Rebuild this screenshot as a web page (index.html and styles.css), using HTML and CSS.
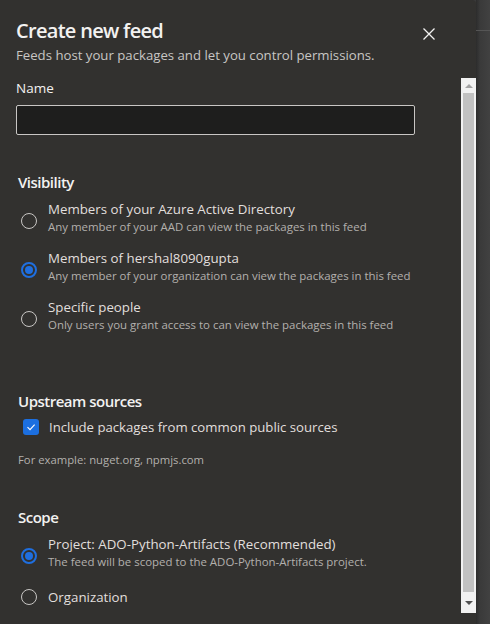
FILE: index.html
```html
<!DOCTYPE html>
<html lang="en">
<head>
<meta charset="utf-8">
<title>Create new feed</title>
<link rel="stylesheet" href="styles.css">
</head>
<body>
<div class="page">
  <div class="panel">
    <header class="header">
      <div class="titles">
        <h1 class="title">Create new feed</h1>
        <p class="subtitle">Feeds host your packages and let you control permissions.</p>
      </div>
      <button class="close" aria-label="Close">
        <svg width="12" height="12" viewBox="0 0 12 12"><path d="M0.5 0.5 L11.5 11.5 M11.5 0.5 L0.5 11.5" stroke="#f3f2f1" stroke-width="1.3" fill="none"/></svg>
      </button>
    </header>
    <div class="body">
      <div class="content">
        <label class="field-label">Name</label>
        <input class="text-input" type="text">

        <h2 class="section-title sec-visibility">Visibility</h2>
        <div class="option">
          <span class="radio"></span>
          <div class="option-text">
            <div class="option-label">Members of your Azure Active Directory</div>
            <div class="option-desc">Any member of your AAD can view the packages in this feed</div>
          </div>
        </div>
        <div class="option">
          <span class="radio checked"></span>
          <div class="option-text">
            <div class="option-label">Members of hershal8090gupta</div>
            <div class="option-desc">Any member of your organization can view the packages in this feed</div>
          </div>
        </div>
        <div class="option">
          <span class="radio"></span>
          <div class="option-text">
            <div class="option-label">Specific people</div>
            <div class="option-desc">Only users you grant access to can view the packages in this feed</div>
          </div>
        </div>

        <h2 class="section-title sec-upstream">Upstream sources</h2>
        <div class="check-row">
          <span class="checkbox">
            <svg width="10" height="10" viewBox="0 0 10 10"><path d="M1.5 5.2 L4 7.6 L8.6 2.6" stroke="#ffffff" stroke-width="1.1" fill="none"/></svg>
          </span>
          <span class="check-label">Include packages from common public sources</span>
        </div>
        <p class="hint">For example: nuget.org, npmjs.com</p>

        <h2 class="section-title sec-scope">Scope</h2>
        <div class="option">
          <span class="radio checked"></span>
          <div class="option-text">
            <div class="option-label">Project: ADO-Python-Artifacts (Recommended)</div>
            <div class="option-desc">The feed will be scoped to the ADO-Python-Artifacts project.</div>
          </div>
        </div>
        <div class="option single">
          <span class="radio"></span>
          <div class="option-text">
            <div class="option-label">Organization</div>
          </div>
        </div>
      </div>
      <div class="scrollbar">
        <div class="sb-btn"><span class="arrow-up"></span></div>
        <div class="sb-track"><div class="sb-thumb"></div></div>
        <div class="sb-btn down"><span class="arrow-down"></span></div>
      </div>
    </div>
  </div>
  <div class="backdrop"><div class="backdrop-top"></div></div>
</div>
</body>
</html>
```
FILE: styles.css
```css
* { box-sizing: border-box; }
html, body { margin: 0; padding: 0; }
body {
  font-family: "Open Sans", "Noto Sans", sans-serif;
  background: #3a3a3a;
  color: #f3f2f1;
}
.page {
  display: flex;
  width: 490px;
  height: 624px;
  overflow: hidden;
}
.panel {
  width: 476px;
  height: 624px;
  background: #32312f;
  border-top-right-radius: 4px;
  display: flex;
  flex-direction: column;
}
.backdrop {
  flex: 1;
  background: linear-gradient(90deg, #2c2c2c 0, #3a3a3a 4px, #414141 100%);
}
.backdrop-top {
  height: 31px;
  border-bottom: 1px solid #555555;
}
.header {
  display: flex;
  justify-content: space-between;
  align-items: flex-start;
  padding: 17px 0 0 16px;
  height: 78px;
}
.title {
  margin: 0;
  font-size: 20px;
  line-height: 28px;
  font-weight: 600;
  color: #f3f2f1;
  letter-spacing: -0.7px;
}
.subtitle {
  margin: 1px 0 0;
  font-size: 13.2px;
  line-height: 18px;
  color: #c8c6c4;
}
.close {
  margin: 11px 41px 0 0;
  width: 12px;
  height: 12px;
  padding: 0;
  border: 0;
  background: none;
  display: flex;
}
.body {
  display: flex;
  height: 535px;
}
.content {
  flex: 1;
  display: flex;
  flex-direction: column;
  align-items: flex-start;
  padding-left: 16px;
}
.field-label {
  font-size: 13.5px;
  line-height: 20px;
  color: #f3f2f1;
}
.text-input {
  margin-top: 7px;
  width: 399px;
  height: 30px;
  background: #1e1e1d;
  border: 1px solid #c8c6c4;
  border-radius: 2px;
  outline: none;
}
.section-title {
  margin: 0;
  padding-left: 2px;
  font-size: 15px;
  line-height: 22px;
  font-weight: 600;
  color: #f3f2f1;
  letter-spacing: -0.5px;
}
.sec-visibility { margin-top: 36px; margin-bottom: 7px; }
.sec-upstream { margin-top: 57px; margin-bottom: 5px; }
.sec-scope { margin-top: 38px; margin-bottom: 7px; }
.option {
  display: flex;
  align-items: flex-start;
  padding-left: 5px;
  gap: 11px;
}
.option + .option { margin-top: 14px; }
.option.single { margin-top: 18px; align-items: center; }
.radio {
  flex: none;
  width: 16px;
  height: 16px;
  margin-top: 13px;
  border: 1px solid #c8c6c4;
  border-radius: 50%;
  display: grid;
  place-items: center;
}
.option.single .radio { margin-top: 0; }
.radio.checked {
  border: 2px solid #1f6fe0;
}
.radio.checked::after {
  content: "";
  width: 8px;
  height: 8px;
  border-radius: 50%;
  background: #1f6fe0;
}
.option-label {
  font-size: 13.3px;
  line-height: 18px;
  color: #e1dfdd;
}
.option-desc {
  margin-top: 1px;
  font-size: 11.45px;
  line-height: 16px;
  color: #b3b0ad;
}
.check-row {
  display: flex;
  align-items: center;
  padding-left: 7px;
  gap: 10px;
  height: 20px;
}
.checkbox {
  width: 16px;
  height: 16px;
  border-radius: 3px;
  background: #1c6fe0;
  display: grid;
  place-items: center;
}
.check-label {
  font-size: 13.2px;
  line-height: 20px;
  color: #e1dfdd;
}
.hint {
  margin: 15px 0 0;
  padding-left: 2px;
  font-size: 11.3px;
  line-height: 16px;
  color: #b3b0ad;
}
.scrollbar {
  width: 15px;
  display: flex;
  flex-direction: column;
  background: #f1f1f1;
}
.sb-btn {
  height: 15px;
  display: grid;
  place-items: center;
}
.sb-btn.down { height: 21px; }
.sb-track {
  flex: 1;
  padding: 0 2px;
}
.sb-thumb {
  height: 100%;
  background: #c1c1c1;
}
.arrow-up {
  width: 0; height: 0;
  border-left: 4px solid transparent;
  border-right: 4px solid transparent;
  border-bottom: 4px solid #a3a3a3;
}
.arrow-down {
  width: 0; height: 0;
  border-left: 4px solid transparent;
  border-right: 4px solid transparent;
  border-top: 4px solid #505050;
}
```
